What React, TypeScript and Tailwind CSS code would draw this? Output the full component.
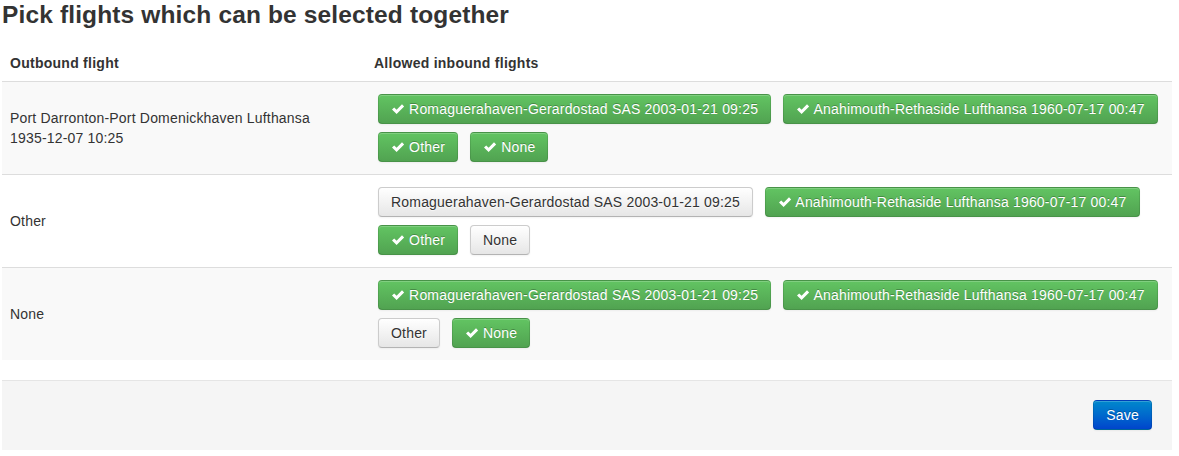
import React from "react";

type Btn = { label: string; on: boolean };

const Check = () => (
  <svg
    viewBox="0 0 14 14"
    className="inline-block w-[14px] h-[14px] align-text-top mt-[1px]"
    aria-hidden="true"
  >
    <path d="M1 7.6 L3.2 5.4 L5.6 7.8 L11 2.3 L13.1 4.4 L5.6 11.9 Z" fill="#ffffff" />
  </svg>
);

const FlightButton = ({ label, on }: Btn) =>
  on ? (
    <button
      type="button"
      className="inline-block h-[30px] px-[12px] py-[4px] leading-[20px] text-[14px] tracking-[0.19px] text-white rounded-[4px] border border-[rgba(0,0,0,0.1)] border-b-[rgba(0,0,0,0.25)] bg-gradient-to-b from-[#62c462] to-[#51a351] shadow-[inset_0_1px_0_rgba(255,255,255,0.2),0_1px_2px_rgba(0,0,0,0.05)] [text-shadow:0_-1px_0_rgba(0,0,0,0.25)] whitespace-nowrap"
    >
      <Check /> {label}
    </button>
  ) : (
    <button
      type="button"
      className="inline-block h-[30px] px-[12px] py-[4px] leading-[20px] text-[14px] tracking-[0.19px] text-[#333333] rounded-[4px] border border-[#cccccc] border-b-[#b3b3b3] bg-gradient-to-b from-[#ffffff] to-[#e6e6e6] shadow-[inset_0_1px_0_rgba(255,255,255,0.2),0_1px_2px_rgba(0,0,0,0.05)] [text-shadow:0_1px_1px_rgba(255,255,255,0.75)] whitespace-nowrap"
    >
      {label}
    </button>
  );

const A = "Romaguerahaven-Gerardostad SAS 2003-01-21 09:25";
const B = "Anahimouth-Rethaside Lufthansa 1960-07-17 00:47";

const rows: { outbound: React.ReactNode; buttons: Btn[] }[] = [
  {
    outbound: (
      <>
        Port Darronton-Port Domenickhaven Lufthansa{" "}
        <span className="whitespace-nowrap">1935-12-07 10:25</span>
      </>
    ),
    buttons: [
      { label: A, on: true },
      { label: B, on: true },
      { label: "Other", on: true },
      { label: "None", on: true },
    ],
  },
  {
    outbound: "Other",
    buttons: [
      { label: A, on: false },
      { label: B, on: true },
      { label: "Other", on: true },
      { label: "None", on: false },
    ],
  },
  {
    outbound: "None",
    buttons: [
      { label: A, on: true },
      { label: B, on: true },
      { label: "Other", on: false },
      { label: "None", on: true },
    ],
  },
];

export default function App() {
  return (
    <div className="min-h-[456px] bg-white font-['Liberation_Sans',Arial,sans-serif] text-[14px] leading-[20px] tracking-[0.19px] text-[#333333]">
      <div className="ml-[2px] w-[1170px]">
        <h3 className="m-0 mb-[15px] text-[24.5px] leading-[30px] font-bold tracking-[0.14px] text-[#333333]">
          Pick flights which can be selected together
        </h3>
        <table className="w-[1170px] border-collapse">
          <thead>
            <tr>
              <th className="w-[364px] p-2 text-left align-bottom font-bold tracking-[0.26px]">Outbound flight</th>
              <th className="p-2 text-left align-bottom font-bold tracking-[0.26px]">Allowed inbound flights</th>
            </tr>
          </thead>
          <tbody>
            {rows.map((r, i) => (
              <tr key={i}>
                <td
                  className={`border-t border-[#dddddd] p-2 align-middle ${
                    i % 2 === 0 ? "bg-[#f9f9f9]" : "bg-white"
                  }`}
                >
                  {r.outbound}
                </td>
                <td
                  className={`border-t border-[#dddddd] p-2 align-middle ${
                    i % 2 === 0 ? "bg-[#f9f9f9]" : "bg-white"
                  }`}
                >
                  <div className="flex flex-wrap gap-x-[12px] gap-y-[8px] p-1">
                    {r.buttons.map((b, j) => (
                      <FlightButton key={j} label={b.label} on={b.on} />
                    ))}
                  </div>
                </td>
              </tr>
            ))}
          </tbody>
        </table>
        <div className="mt-[20px] border-t border-[#e5e5e5] bg-[#f5f5f5] pt-[19px] pb-[20px] px-[20px] text-right">
          <button
            type="button"
            className="inline-block h-[30px] px-[12px] py-[4px] leading-[20px] text-[14px] tracking-[0.19px] text-white rounded-[4px] border border-[rgba(0,0,0,0.1)] border-b-[rgba(0,0,0,0.25)] bg-gradient-to-b from-[#0088cc] to-[#0044cc] shadow-[inset_0_1px_0_rgba(255,255,255,0.2),0_1px_2px_rgba(0,0,0,0.05)] [text-shadow:0_-1px_0_rgba(0,0,0,0.25)]"
          >
            Save
          </button>
        </div>
      </div>
    </div>
  );
}
